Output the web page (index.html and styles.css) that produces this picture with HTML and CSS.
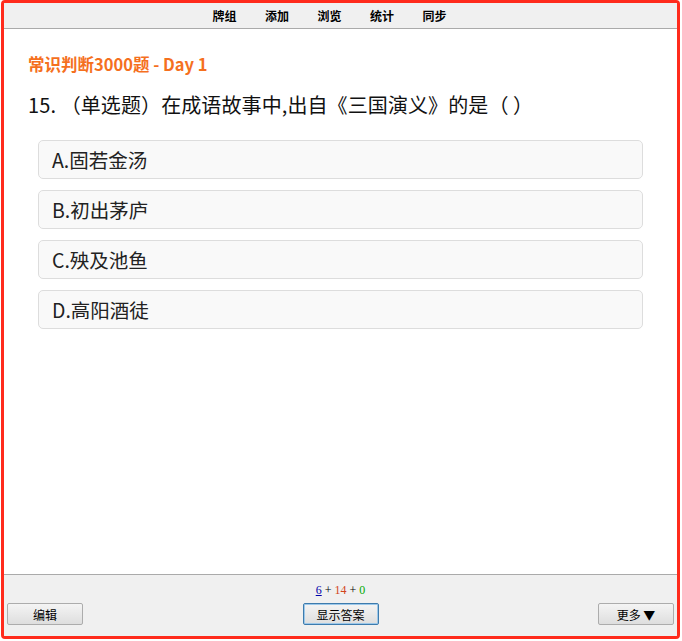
FILE: index.html
```html
<!DOCTYPE html>
<html lang="zh-CN">
<head>
  <meta charset="UTF-8" />
  <title>Reviewer</title>
  <link rel="stylesheet" href="styles.css">
</head>
<body>
  <div class="frame">
    <!-- Top menu -->
    <nav class="toolbar">
      <a href="#">牌组</a>
      <a href="#">添加</a>
      <a href="#">浏览</a>
      <a href="#">统计</a>
      <a href="#">同步</a>
    </nav>
    <!-- Card -->
    <main class="card">
      <div class="deck-title">常识判断3000题 - Day 1</div>
      <div class="question">15. （单选题）在成语故事中,出自《三国演义》的是（ ）</div>
      <div class="options">
        <div class="option">A.固若金汤</div>
        <div class="option">B.初出茅庐</div>
        <div class="option">C.殃及池鱼</div>
        <div class="option">D.高阳酒徒</div>
      </div>
    </main>
    <!-- Bottom bar -->
    <footer class="bottombar">
      <div class="counts">
        <a href="#" class="new">6</a> + <span class="learn">14</span> + <span class="review">0</span>
      </div>
      <div class="buttons">
        <button class="btn">编辑</button>
        <button class="btn focus">显示答案</button>
        <button class="btn">更多 ▼</button>
      </div>
    </footer>
  </div>
</body>
</html>
```

FILE: styles.css
```css
/* Reset */
* { margin: 0; padding: 0; box-sizing: border-box; }
html, body { height: 100%; background: #fff; }
body { font-family: "Noto Sans CJK SC", "Noto Sans", sans-serif; }

/* Outer red frame */
.frame {
  width: 679px;
  height: 639px;
  margin-left: 1px;
  border: 3px solid #ff2b1c;
  border-radius: 4px;
  display: flex;
  flex-direction: column;
  overflow: hidden;
}

/* Top menu */
.toolbar {
  height: 26px;
  background: #f0f0f0;
  border-bottom: 1px solid #aaa;
  display: flex;
  justify-content: center;
  align-items: center;
  gap: 28.5px;
  padding-right: 22px;
}
.toolbar a {
  font-size: 12px;
  font-weight: bold;
  color: #000;
  text-decoration: none;
}

/* Card */
.card {
  flex: 1;
  padding: 23px 24px 0;
  background: #fff;
}
.deck-title {
  font-size: 16.5px;
  font-weight: bold;
  line-height: 24px;
  color: #f5701e;
}
.question {
  margin-top: 14px;
  font-size: 20px;
  line-height: 30px;
  color: #111;
  letter-spacing: 0.1px;
}
.options {
  margin: 20px 10px 0;
  display: flex;
  flex-direction: column;
  gap: 11px;
}
.option {
  height: 39px;
  line-height: 37px;
  padding: 0 13px;
  font-size: 19.5px;
  color: #222;
  background: #f9f9f9;
  border: 1px solid #ddd;
  border-radius: 5px;
}

/* Bottom bar */
.bottombar {
  height: 62px;
  background: #f0f0f0;
  border-top: 1px solid #aaa;
  padding: 8px 3px 0;
}
.counts {
  text-align: center;
  font-family: "Liberation Serif", serif;
  font-size: 12px;
  line-height: 14px;
  color: #000;
}
.counts .new { color: #00a; }
.counts .learn { color: #d2441c; }
.counts .review { color: #0a0; }
.buttons {
  margin-top: 6px;
  display: flex;
  justify-content: space-between;
}
.btn {
  width: 76px;
  height: 22px;
  font-family: "Noto Sans CJK SC", sans-serif;
  font-size: 12px;
  color: #000;
  background: linear-gradient(#f4f4f4, #dedede);
  border: 1px solid #acacac;
  border-radius: 2px;
}
.btn.focus {
  border-color: #3d7bad;
  box-shadow: inset 0 0 0 1px #9cc8ea;
}
```
